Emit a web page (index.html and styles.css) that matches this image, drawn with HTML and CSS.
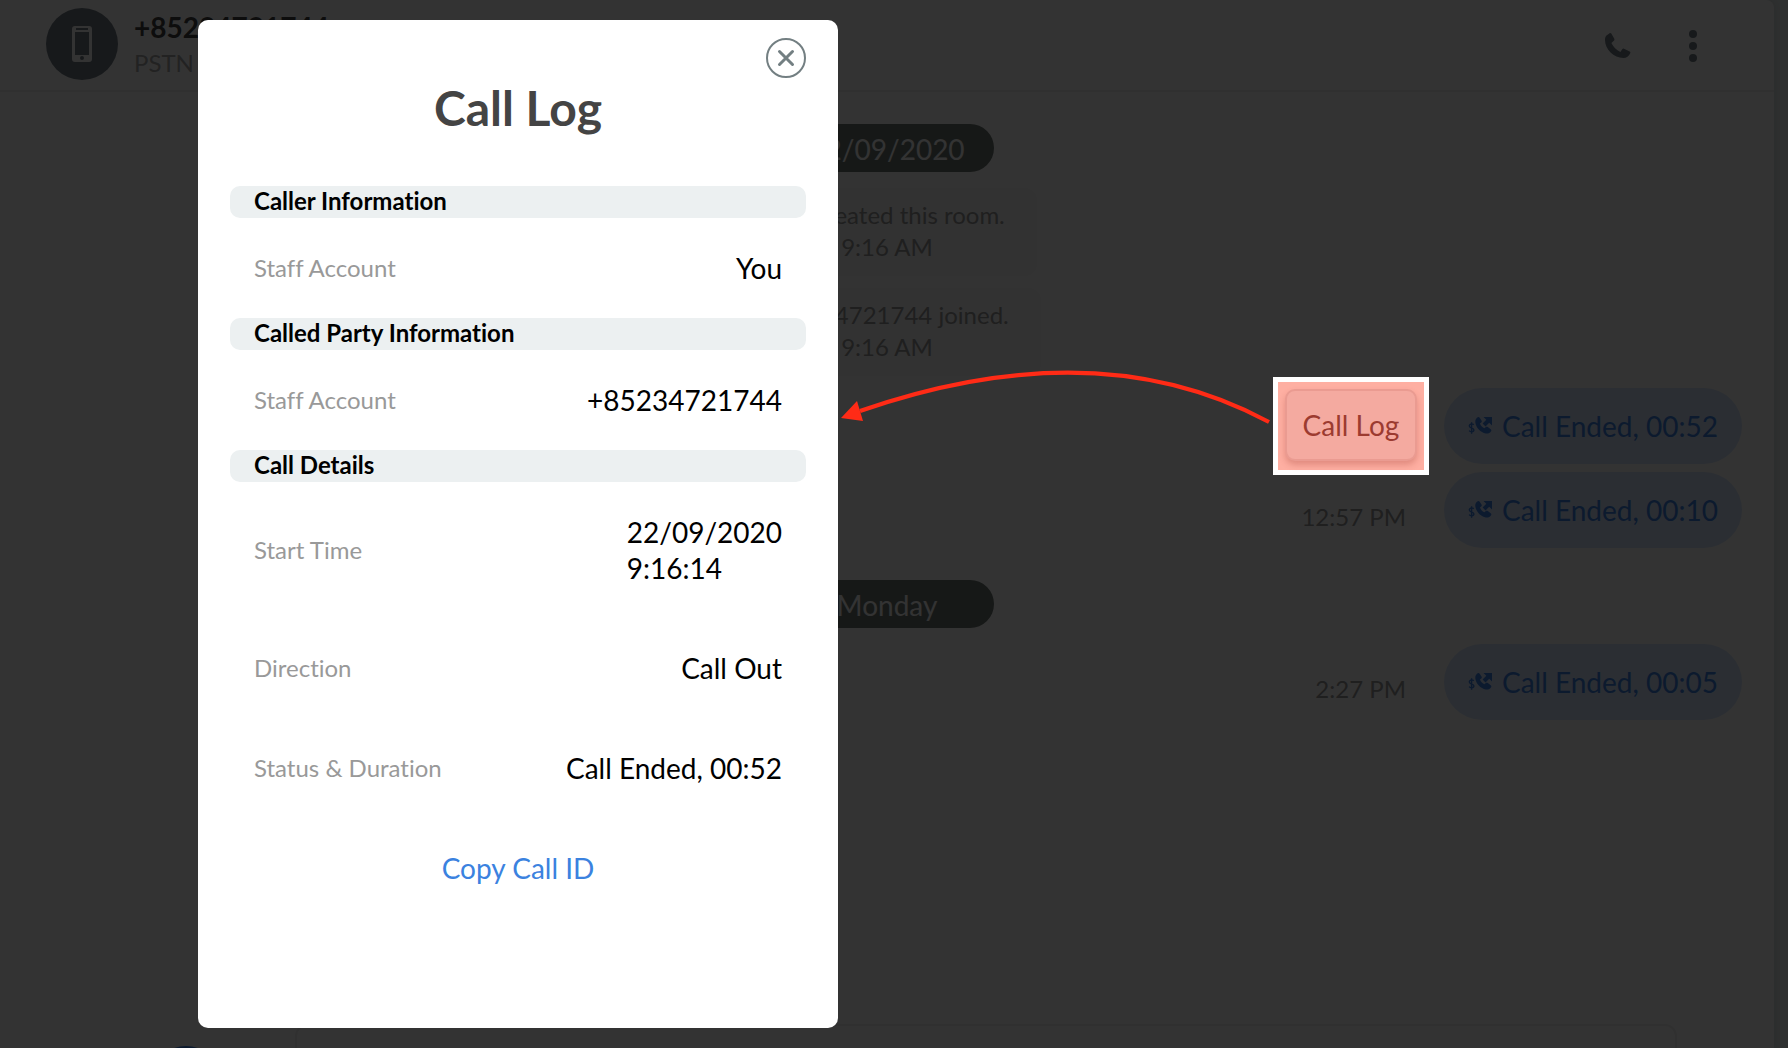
FILE: index.html
```html
<!DOCTYPE html>
<html lang="en">
<head>
    <meta charset="UTF-8">
    <meta name="viewport" content="width=device-width, initial-scale=1.0">
    <title>Call Log</title>
    <link rel="stylesheet" href="styles.css">
</head>
<body>
    <svg class="defs" aria-hidden="true">
        <symbol id="call-out" viewBox="0 0 24 20">
            <path d="M5.8 8.8C5.3 8.2 4.6 7.900 3.700 7.900 2.300 7.900 1.300 8.700 1.300 10c0 2.600 4.600 1.700 4.600 4 0 1-.9 1.700-2.200 1.700-1.100 0-2-.4-2.600-1.100M3.600 6.200v11.600" fill="none" stroke="currentColor" stroke-width="1.400"/>
            <path d="M9.200 1.600c.8-.9 1.800-.8 2.500.1l1.800 2.700c.5.800.4 1.600-.4 2.200l-1.100.9c.6 2 2.200 3.800 4.300 4.700l1.300-1c.7-.6 1.500-.6 2.200-.1l2.900 2.100c.8.600.9 1.500.2 2.300-1.300 1.700-3 2.300-5 1.900-5.400-1-9.900-5.700-10.600-11.200-.2-1.900.6-3.500 1.900-4.600z" fill="currentColor"/>
            <path d="M15.500 1H24v8.500l-2.800-2.800-3.700 3.700-2.900-2.900 3.700-3.700z" fill="currentColor"/>
        </symbol>
    </svg>

    <!-- Chat room -->
    <main class="chat">
        <header class="chat-header">
            <div class="avatar">
                <svg width="20" height="36" viewBox="0 0 20 36">
                    <path fill-rule="evenodd" d="M3 0h14a3 3 0 0 1 3 3v30a3 3 0 0 1-3 3H3a3 3 0 0 1-3-3V3a3 3 0 0 1 3-3zM3 6h14v23H3zM4 2h12v2H4zM10 30a2 2 0 1 0 0 4 2 2 0 0 0 0-4z" fill="#fff"/>
                </svg>
            </div>
            <div class="contact">
                <div class="contact-name">+85234721744</div>
                <div class="contact-type">PSTN</div>
            </div>
            <button type="button" class="icon-button" aria-label="Call">
                <svg width="28" height="28" viewBox="0 0 28 28">
                    <path d="M2.200 3.800 5.600 1.300c.6-.4 1.300-.3 1.700.3l3 5.200c.3.600.2 1.200-.2 1.600L7.400 11c1.900 4 4.900 7.100 9 9l2-2.900c.4-.6 1-.7 1.600-.4l5.700 2.900c.7.400.9 1 .5 1.700-1.300 3-3.700 4.700-6.800 4.700C9.700 26 1 17.300 1 8c0-1.700.2-3 1.200-4.200z" fill="currentColor"/>
                </svg>
            </button>
            <button type="button" class="icon-button" aria-label="More">
                <svg width="8" height="34" viewBox="0 0 8 34">
                    <circle cx="4" cy="5" r="4" fill="currentColor"/>
                    <circle cx="4" cy="17" r="4" fill="currentColor"/>
                    <circle cx="4" cy="29" r="4" fill="currentColor"/>
                </svg>
            </button>
        </header>

        <div class="messages">
            <div class="date">22/09/2020</div>
            <div class="notice">You created this room.<br>9:16 AM</div>
            <div class="notice">+85234721744 joined.<br>9:16 AM</div>
            <div class="message message-active">
                <div class="highlight">
                    <button type="button" class="log-button">Call Log</button>
                </div>
                <div class="bubble"><svg class="call-icon"><use href="#call-out"/></svg>Call Ended, 00:52</div>
            </div>
            <div class="message">
                <time class="time">12:57 PM</time>
                <div class="bubble"><svg class="call-icon"><use href="#call-out"/></svg>Call Ended, 00:10</div>
            </div>
            <div class="date date-next">Monday</div>
            <div class="message">
                <time class="time">2:27 PM</time>
                <div class="bubble"><svg class="call-icon"><use href="#call-out"/></svg>Call Ended, 00:05</div>
            </div>
        </div>

        <footer class="composer">
            <button type="button" class="attach" aria-label="Attach"></button>
            <textarea class="composer-input" aria-label="Message"></textarea>
        </footer>
    </main>

    <!-- Call log dialog -->
    <div class="overlay">
        <section class="modal" role="dialog" aria-labelledby="modalTitle">
            <button type="button" class="close" aria-label="Close">
                <svg width="40" height="40" viewBox="0 0 40 40" fill="none" stroke="currentColor">
                    <circle cx="20" cy="20" r="19" stroke-width="2"/>
                    <path d="M13.500 13.500l13 13M26.500 13.500l-13 13" stroke-width="3" stroke-linecap="round"/>
                </svg>
            </button>
            <h1 id="modalTitle">Call Log</h1>

            <h2>Caller Information</h2>
            <dl>
                <div class="row"><dt>Staff Account</dt><dd>You</dd></div>
            </dl>

            <h2>Called Party Information</h2>
            <dl>
                <div class="row"><dt>Staff Account</dt><dd>+85234721744</dd></div>
            </dl>

            <h2>Call Details</h2>
            <dl>
                <div class="row"><dt>Start Time</dt><dd>22/09/2020<br>9:16:14</dd></div>
                <div class="row"><dt>Direction</dt><dd>Call Out</dd></div>
                <div class="row"><dt>Status &amp; Duration</dt><dd>Call Ended, 00:52</dd></div>
            </dl>

            <button type="button" class="copy">Copy Call ID</button>
        </section>
    </div>

    <!-- Arrow from the button to the dialog -->
    <svg class="arrow" viewBox="0 0 440 70">
        <path d="M431 62C318 1 184 -5 22 51" fill="none" stroke="#ff2b16" stroke-width="4"/>
        <path d="M3 58 19 41 25 61z" fill="#ff2b16"/>
    </svg>
</body>
</html>
```
FILE: styles.css
```css
* {
    box-sizing: border-box;
}
body {
    margin: 0;
    height: 100vh;
    overflow: hidden;
    padding-right: 14px;
    background: #e6eeee;
    font-family: Lato, sans-serif;
    font-size: 28px;
    line-height: 36px;
    font-variant-ligatures: no-common-ligatures;
}
button {
    padding: 0;
    border: none;
    background: none;
    font: inherit;
    cursor: pointer;
}
svg {
    display: block;
}
.defs {
    position: absolute;
    width: 0;
    height: 0;
}

/* Chat room */
.chat {
    display: flex;
    flex-direction: column;
    height: 100%;
    background: #fff;
    border-radius: 0 8px 0 0;
    box-shadow: 0 0 8px rgba(0, 0, 0, 0.1);
}
.chat-header {
    display: flex;
    align-items: center;
    height: 92px;
    padding: 8px 77px 10px 46px;
    border-bottom: 2px solid #eee;
}
.avatar {
    display: flex;
    align-items: center;
    justify-content: center;
    width: 72px;
    height: 72px;
    border-radius: 50%;
    background: #737d87;
}
.contact {
    flex: 1;
    margin-left: 16px;
    padding-top: 2px;
}
.contact-name {
    color: #444;
    font-weight: bold;
}
.contact-type {
    color: #aaa;
    font-size: 24px;
}
.icon-button {
    margin-left: 57px;
    padding-top: 4px;
    color: #737d87;
}
.messages {
    flex: 1;
    padding: 32px 32px 0;
}
.date {
    width: 214px;
    margin: 0 auto 16px;
    padding: 7px 0 5px;
    border-radius: 24px;
    background: #6e7874;
    color: #fff;
    text-align: center;
}
.date-next {
    margin-top: 32px;
}
.notice {
    width: fit-content;
    margin: 0 auto 12px;
    padding: 11px 32px 13px;
    border-radius: 12px;
    background: #fafafa;
    color: #999;
    font-size: 24px;
    line-height: 32px;
    text-align: center;
}
.message {
    display: flex;
    align-items: flex-end;
    justify-content: flex-end;
    height: 76px;
    margin-bottom: 8px;
}
.message-active {
    align-items: center;
}
.bubble {
    display: flex;
    align-items: center;
    padding: 20px 24px;
    border-radius: 38px;
    background: #d7e6ff;
    color: #3c82e6;
}
.call-icon {
    width: 24px;
    height: 20px;
    margin-right: 10px;
}
.time {
    margin: 0 38px 15px 0;
    color: #999;
    font-size: 24px;
    line-height: 32px;
}
.highlight {
    z-index: 2;
    margin-right: 15px;
    padding: 7px 7px 9px;
    border: 5px solid #fff;
    background: #feafa2;
}
.log-button {
    display: block;
    width: 132px;
    height: 72px;
    border: 2px solid #ea9b91;
    border-radius: 10px;
    background: #f4aaa0;
    box-shadow: 0 4px 6px rgba(160, 60, 50, 0.3);
    color: #9c3b30;
}
.composer {
    display: flex;
    align-items: flex-start;
    height: 24px;
    padding: 0 97px 0 150px;
    overflow: hidden;
}
.attach {
    width: 72px;
    height: 72px;
    margin: 22px 73px 0 0;
    border-radius: 50%;
    background: #3c82e6;
}
.composer-input {
    flex: 1;
    height: 80px;
    border: 2px solid #eee;
    border-radius: 12px;
    resize: none;
}

/* Call log dialog */
.overlay {
    position: fixed;
    inset: 0;
    z-index: 1;
    display: flex;
    padding: 20px 20px 20px 198px;
    background: rgba(0, 0, 0, 0.8);
}
.modal {
    display: flex;
    flex-direction: column;
    width: 640px;
    padding: 18px 32px;
    border-radius: 10px;
    background: #fff;
}
.close {
    align-self: flex-end;
    color: #737f82;
}
h1 {
    margin: 0 0 48px;
    color: #444;
    font-size: 48px;
    line-height: 60px;
    text-align: center;
}
h2 {
    height: 32px;
    margin: 0;
    padding: 0 24px;
    border-radius: 10px;
    background: #ecf0f1;
    font-size: 24px;
    line-height: 30px;
}
dl {
    margin: 0;
}
.row {
    display: flex;
    align-items: center;
    justify-content: space-between;
    padding: 32px 24px;
}
dt {
    color: #999;
    font-size: 24px;
}
dd {
    margin: 0;
}
.copy {
    align-self: center;
    margin-top: 32px;
    color: #3b82df;
}
.arrow {
    position: absolute;
    top: 360px;
    left: 838px;
    z-index: 2;
    width: 440px;
    height: 70px;
}
```
